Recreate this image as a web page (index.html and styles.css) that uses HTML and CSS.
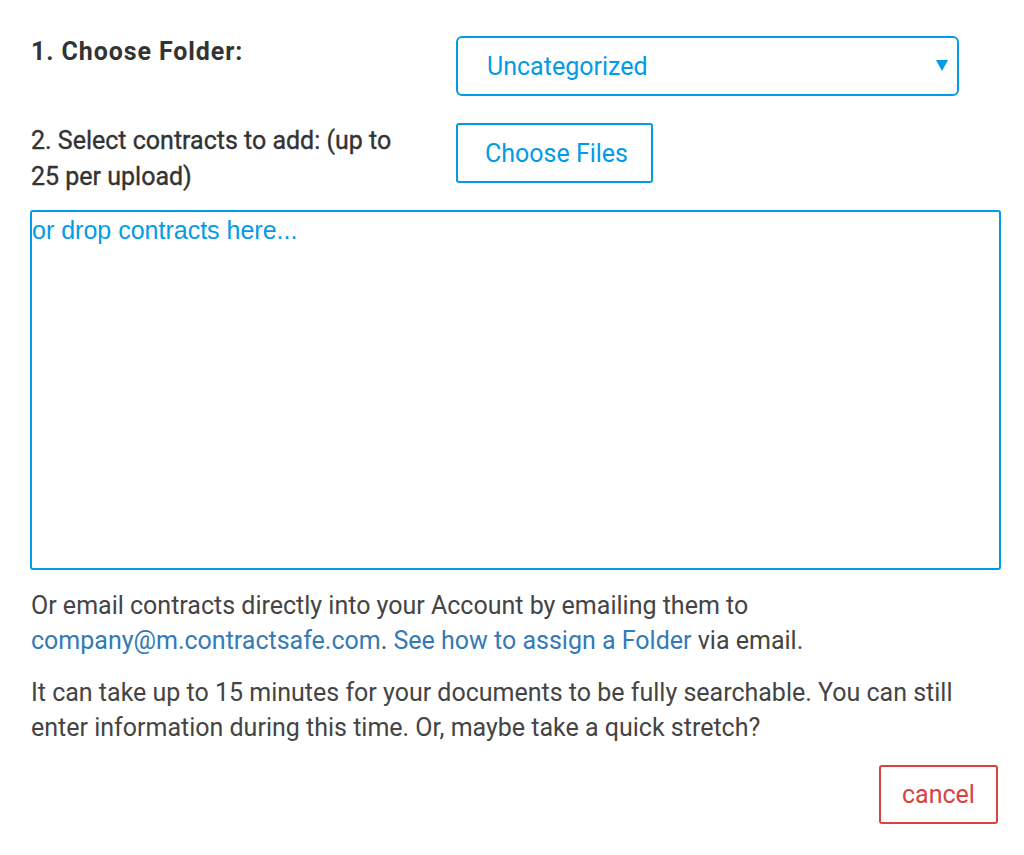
FILE: index.html
```html
<!DOCTYPE html>
<html>
<head>
<meta charset="utf-8">
<link rel="stylesheet" href="styles.css">
</head>
<body>
<div class="page">
  <div class="row row-folder">
    <div class="label label-bold">1. Choose Folder:</div>
    <div class="field">
      <div class="select">
        <span class="select-text">Uncategorized</span>
        <span class="select-arrow"></span>
      </div>
    </div>
  </div>
  <div class="row row-files">
    <div class="label">2. Select contracts to add: (up to 25 per upload)</div>
    <div class="field">
      <button class="btn-files">Choose Files</button>
    </div>
  </div>
  <div class="dropzone">or drop contracts here...</div>
  <p class="info">Or email contracts directly into your Account by emailing them to <a href="#">company@m.contractsafe.com</a>. <a href="#">See how to assign a Folder</a> via email.</p>
  <p class="info">It can take up to 15 minutes for your documents to be fully searchable. You can still enter information during this time. Or, maybe take a quick stretch?</p>
  <div class="actions">
    <button class="btn-cancel">cancel</button>
  </div>
</div>
</body>
</html>
```

FILE: styles.css
```css
* { box-sizing: border-box; }
body {
  margin: 0;
  background: #fff;
  font-family: Roboto, "Liberation Sans", sans-serif;
  color: #333;
}
.page {
  width: 971px;
  margin-left: 30px;
  padding-top: 36px;
}
.row {
  display: flex;
  align-items: flex-start;
}
.label {
  width: 426px;
  padding-left: 1px;
  padding-right: 45px;
  font-size: 25px;
  line-height: 36px;
  font-weight: 400;
  color: #333;
  -webkit-text-stroke: 0.35px #333;
}
.label-bold {
  font-weight: 700;
  letter-spacing: 0.9px;
  line-height: 32px;
  -webkit-text-stroke: 0;
}
.field { flex: 1; }
.row-folder { height: 87px; }
.select {
  width: 503px;
  height: 60px;
  border: 2px solid #039be5;
  border-radius: 6px;
  display: flex;
  align-items: center;
  justify-content: space-between;
  padding: 0 9px 0 29px;
  color: #039be5;
  font-size: 25px;
}
.select-arrow {
  width: 0;
  height: 0;
  border-left: 6px solid transparent;
  border-right: 6px solid transparent;
  border-top: 11px solid #039be5;
  margin-top: -2px;
}
.row-files { height: 87px; }
.btn-files {
  width: 197px;
  height: 60px;
  border: 2px solid #039be5;
  border-radius: 3px;
  background: #fff;
  color: #039be5;
  font-family: Roboto, sans-serif;
  font-size: 25px;
  padding: 0 0 0 4px;
}
.dropzone {
  height: 360px;
  border: 2px solid #039be5;
  border-radius: 3px;
  font-family: "Liberation Sans", Arial, sans-serif;
  font-size: 25px;
  color: #039be5;
  line-height: 36px;
}
.info {
  margin: 18px 0 0;
  font-size: 25px;
  line-height: 35px;
  color: #444;
  padding-left: 1px;
}
.info + .info { margin-top: 17px; }
.info a { color: #337ab7; text-decoration: none; }
.actions {
  display: flex;
  justify-content: flex-end;
  margin-top: 20px;
  padding-right: 3px;
}
.btn-cancel {
  width: 119px;
  height: 59px;
  border: 2px solid #d9423f;
  border-radius: 3px;
  background: #fff;
  color: #d9423f;
  font-family: Roboto, sans-serif;
  font-size: 25px;
  padding: 0;
}
```
